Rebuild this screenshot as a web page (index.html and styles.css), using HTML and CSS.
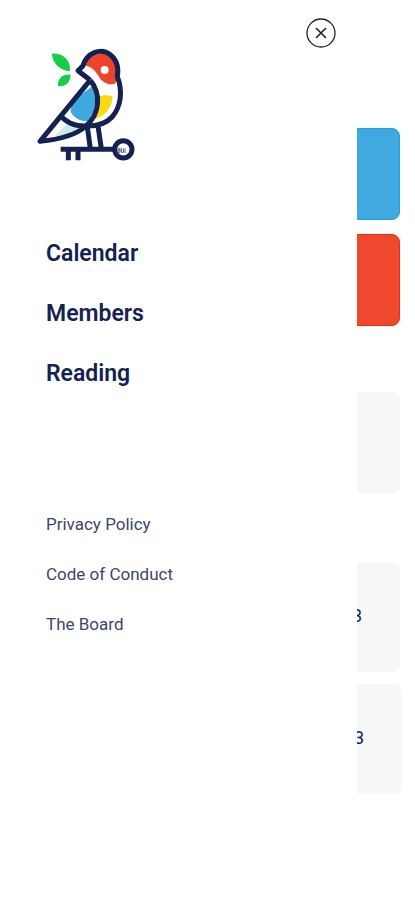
FILE: index.html
```html
<!DOCTYPE html>
<html lang="en">
<head>
<meta charset="utf-8">
<meta name="viewport" content="width=device-width, initial-scale=1">
<title>Menu</title>
<link rel="stylesheet" href="styles.css">
</head>
<body>
<main class="page">
  <section class="group">
    <div class="card card-blue"></div>
    <div class="card card-red"></div>
  </section>
  <section class="card card-plain"></section>
  <section class="group group-events">
    <div class="card card-event">3</div>
    <div class="card card-event card-wide">3</div>
  </section>
</main>
<aside class="drawer">
  <header class="drawer-head">
    <svg class="logo" viewBox="0 0 345 390" role="img" aria-label="Bird on a key">
      <path fill="#14cf46" d="M65 41C94 39 122 55 120 93C92 93 69 71 65 41Z"/>
      <path fill="#14cf46" d="M122 104C96 102 82 117 84 138C108 141 121 126 122 104Z"/>
      <path fill="#ee432b" d="M164 76C176 44 218 30 242 52C259 68 262 94 257 130C240 138 218 130 206 109C194 89 181 79 164 76Z"/>
      <circle cx="224" cy="90" r="12" fill="#fff"/>
      <path fill="#f8d914" d="M209 169Q228 163 247 169C248 201 227 228 190 239C202 218 208 194 209 169Z"/>
      <path fill="#3da9df" d="M186 139C202 174 198 211 174 243C153 245 134 236 122 216C121 184 153 165 186 139Z"/>
      <path fill="#cdebe5" d="M112 250Q130 261 153 262Q122 285 75 289Z"/>
      <g fill="none" stroke="#132250" stroke-width="15" stroke-linejoin="round">
        <path d="M181 121L144 92L159 77C170 39 212 22 241 44C263 61 266 85 262 110C279 154 273 200 246 231C227 252 201 259 168 258"/>
        <path d="M180 121L30 304C84 299 136 287 168 258C211 221 213 160 181 121M88 223C107 248 137 259 168 258"/>
        <path d="M172 261L181 326M204 258L214 326M92 328H253M115 328V361M144 328V361"/>
        <circle cx="280" cy="328" r="26"/>
      </g>
      <path fill="none" stroke="#56617f" stroke-width="3" d="M264 326h6v11h-6zM264 331h6M274 325v12h6v-12M285 325v14"/>
    </svg>
    <button class="close" type="button" aria-label="Close menu">
      <svg viewBox="0 0 30 30" fill="none" stroke="#222" stroke-width="1.3" aria-hidden="true">
        <circle cx="15" cy="15" r="14"/>
        <path d="M10 10L20 20M20 10L10 20" stroke-width="1.6"/>
      </svg>
    </button>
  </header>
  <nav class="links primary" aria-label="Main">
    <a href="#calendar">Calendar</a>
    <a href="#members">Members</a>
    <a href="#reading">Reading</a>
  </nav>
  <nav class="links secondary" aria-label="About">
    <a href="#privacy">Privacy Policy</a>
    <a href="#conduct">Code of Conduct</a>
    <a href="#board">The Board</a>
  </nav>
</aside>
</body>
</html>
```
FILE: styles.css
```css
* {
  box-sizing: border-box;
}

body {
  margin: 0;
  background: #fff;
  color: #132250;
  font-family: Roboto, "Liberation Sans", sans-serif;
}

.page {
  padding: 128px 15px 0;
}

.group {
  display: grid;
  gap: 14px;
}

.card {
  border-radius: 8px;
}

.card-blue {
  height: 92px;
  background: #40aae0;
  border: 1px solid #249fdc;
}

.card-red {
  height: 92px;
  background: #f0472f;
  border: 1px solid #ec2a16;
}

.card-plain {
  height: 102px;
  margin-top: 66px;
  background: #f7f7f7;
}

.group-events {
  gap: 12px;
  margin-top: 68px;
}

.card-event {
  display: flex;
  align-items: center;
  justify-content: flex-end;
  height: 110px;
  padding: 0 38px 4px 0;
  background: #f7f8f8;
  font-size: 18px;
}

.card-wide {
  margin-right: -2px;
}

.drawer {
  position: fixed;
  inset: 0 58px 0 0;
  overflow: auto;
  background: #fff;
}

.drawer-head {
  display: flex;
  align-items: flex-start;
  justify-content: space-between;
  padding: 18px 21px 0 30px;
}

.logo {
  width: 115px;
  height: 130px;
  margin-top: 22px;
}

.close {
  width: 30px;
  height: 30px;
  padding: 0;
  border: 0;
  background: none;
  cursor: pointer;
}

.close svg {
  display: block;
}

.links {
  display: flex;
  flex-direction: column;
  align-items: flex-start;
  padding-left: 46px;
}

.links a {
  color: inherit;
  text-decoration: none;
}

.primary {
  gap: 32px;
  margin-top: 70px;
  font-size: 23px;
  font-weight: 600;
  line-height: 28px;
}

.secondary {
  gap: 26px;
  margin-top: 124px;
  color: #3c4768;
  font-size: 17px;
  line-height: 24px;
}
```
